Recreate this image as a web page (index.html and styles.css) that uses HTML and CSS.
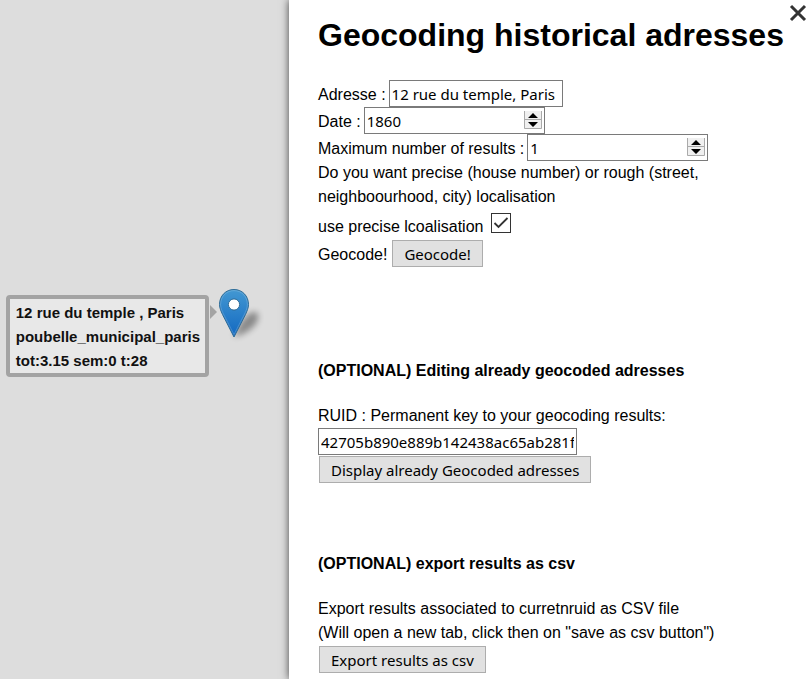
FILE: index.html
```html
<!DOCTYPE html>
<html lang="en">
<head>
<meta charset="utf-8">
<title>Geocoding historical adresses</title>
<link rel="stylesheet" href="styles.css">
</head>
<body>
<div class="app">
  <section class="map" aria-label="Map">
    <div class="place">
      <div class="tip">12 rue du temple , Paris<br>poubelle_municipal_paris<br>tot:3.15 sem:0 t:28</div>
      <svg class="pin" width="46" height="56" viewBox="0 0 46 56" aria-hidden="true">
        <defs>
          <linearGradient id="pinFill" x1="0" y1="0" x2="0" y2="1">
            <stop offset="0" stop-color="#4398d2"/>
            <stop offset="1" stop-color="#1268c1"/>
          </linearGradient>
          <filter id="soft" x="-50%" y="-50%" width="200%" height="200%"><feGaussianBlur stdDeviation="3"/></filter>
        </defs>
        <path d="M16 49C20 38 27 25 36 24C43 24 41 34 34 40C28 45 22 47 16 49Z" fill="#000" opacity=".38" filter="url(#soft)"/>
        <path d="M16 1.500C7.700 1.500 1.500 8 1.500 16.500C1.500 20 3 23 4.500 26.500L16 49L27.500 26.500C29 23 30.500 20 30.500 16.500C30.500 8 24.300 1.500 16 1.500Z" fill="url(#pinFill)" stroke="#2e6c97"/>
        <path d="M16 2.600C8.300 2.600 2.600 8.600 2.600 16.500C2.600 20 4 23 5.500 26.100L16 46.500L26.500 26.100C28 23 29.400 20 29.400 16.500C29.400 8.600 23.700 2.600 16 2.600Z" fill="none" stroke="#fff" opacity=".18"/>
        <circle cx="16" cy="16.500" r="5.600" fill="#fff" stroke="#2e6c97"/>
      </svg>
    </div>
  </section>
  <main class="panel">
    <button class="close" type="button" aria-label="Close">
      <svg width="18" height="18" viewBox="0 0 18 18" aria-hidden="true"><path d="M2 2L16 16M16 2L2 16" stroke="#333" stroke-width="3"/></svg>
    </button>
    <h1>Geocoding historical adresses</h1>
    <form class="geocode">
      <div class="row"><label for="adresse">Adresse :</label><input class="field address" id="adresse" type="text" value="12 rue du temple, Paris"></div>
      <div class="row"><label for="date">Date :</label><span class="number"><input class="field" id="date" type="number" value="1860"><svg class="spinner" width="18" height="18" viewBox="0 0 18 18" aria-hidden="true"><path d="M0 0H18V18H0Z" fill="#f0f0f0"/><path d="M.5 0V17.500H17.500V0M0 8.500H18" fill="none" stroke="#aaa"/><path d="M4 7L9 2L14 7ZM4 11H14L9 16Z" fill="#000"/></svg></span></div>
      <div class="row"><label for="max">Maximum number of results :</label><span class="number"><input class="field" id="max" type="number" value="1"><svg class="spinner" width="18" height="18" viewBox="0 0 18 18" aria-hidden="true"><path d="M0 0H18V18H0Z" fill="#f0f0f0"/><path d="M.5 0V17.500H17.500V0M0 8.500H18" fill="none" stroke="#aaa"/><path d="M4 7L9 2L14 7ZM4 11H14L9 16Z" fill="#000"/></svg></span></div>
      <p class="hint">Do you want precise (house number) or rough (street, neighboourhood, city) localisation</p>
      <div class="row check"><label for="precise">use precise lcoalisation</label><span class="box"><input id="precise" type="checkbox" checked><svg width="20" height="20" viewBox="0 0 20 20" aria-hidden="true"><path d="M3.500 10L7.500 14L16.500 5" fill="none" stroke="#333" stroke-width="1.800"/></svg></span></div>
      <div class="row submit"><label for="go">Geocode!</label><button class="button" id="go" type="button">Geocode!</button></div>
    </form>
    <section class="edit">
      <h2>(OPTIONAL) Editing already geocoded adresses</h2>
      <label class="line" for="ruid">RUID : Permanent key to your geocoding results:</label>
      <input class="field ruid" id="ruid" type="text" value="42705b890e889b142438ac65ab281f3c">
      <button class="button below" type="button">Display already Geocoded adresses</button>
    </section>
    <section class="export">
      <h2>(OPTIONAL) export results as csv</h2>
      <p>Export results associated to curretnruid as CSV file<br>(Will open a new tab, click then on "save as csv button")</p>
      <button class="button below" type="button">Export results as csv</button>
    </section>
  </main>
</div>
</body>
</html>
```
FILE: styles.css
```css
* { box-sizing: border-box; }
body { margin: 0; font: 16px/24px "Liberation Sans", Arial, sans-serif; color: #000; }
h1, h2, p { margin: 0; }
.app { display: grid; grid-template-columns: minmax(0, 289fr) minmax(0, 523fr); min-height: 100vh; }
.map { position: relative; background: #ddd; }
.place { position: absolute; top: 288px; right: 25px; display: flex; align-items: flex-start; }
.tip { position: relative; margin: 7px 9px 0 0; padding: 2px 5px 0 6px; border: 4px solid #a3a3a3; border-radius: 4px; background: #e8e8e8; font-size: 15px; font-weight: bold; color: #111; white-space: nowrap; }
.tip::after { content: ""; position: absolute; left: calc(100% + 5px); top: 6px; border: 7px solid transparent; border-left-color: #a3a3a3; border-right: 0; }
.pin { display: block; }
.panel { position: relative; padding: 11px 20px 6px 29px; background: #fff; box-shadow: 0 0 8px rgba(0, 0, 0, .7); }
.close { position: absolute; top: 4px; right: 5px; padding: 0; border: 0; background: none; line-height: 0; }
h1 { font-size: 32px; line-height: 48px; }
h2 { font-size: 16px; line-height: 24px; margin-bottom: 21px; }
.geocode { margin-top: 21px; }
.row { display: flex; align-items: center; gap: 3px; height: 27px; }
.row label { padding-top: 2px; }
.field { display: block; height: 27px; width: 181px; padding: 0 2px; border: 1px solid #7a7a7a; border-radius: 0; background: #fff; color: #000; font: 15px "Noto Sans", sans-serif; appearance: textfield; }
.field::-webkit-inner-spin-button { display: none; }
.address { width: 174px; }
.number { position: relative; }
.spinner { position: absolute; top: 4px; right: 3px; }
.hint { max-width: 400px; }
.row.check { height: 31px; gap: 8px; }
.row.submit { gap: 5px; }
.check label { padding-top: 4px; }
.box { position: relative; width: 20px; height: 20px; margin-bottom: 4px; }
.box input { display: block; width: 20px; height: 20px; margin: 0; border: 1px solid #333; appearance: none; background: #fff; }
.box svg { position: absolute; inset: 0; pointer-events: none; }
.button { display: block; height: 27px; padding: 0 11px; border: 1px solid #adadad; border-radius: 0; background: #e1e1e1; color: #000; font: 15px "Noto Sans", sans-serif; }
.below { margin: 1px 0 0 1px; }
.edit { margin-top: 92px; }
.export { margin-top: 69px; }
.line { display: block; }
.ruid { width: 259px; }
```
